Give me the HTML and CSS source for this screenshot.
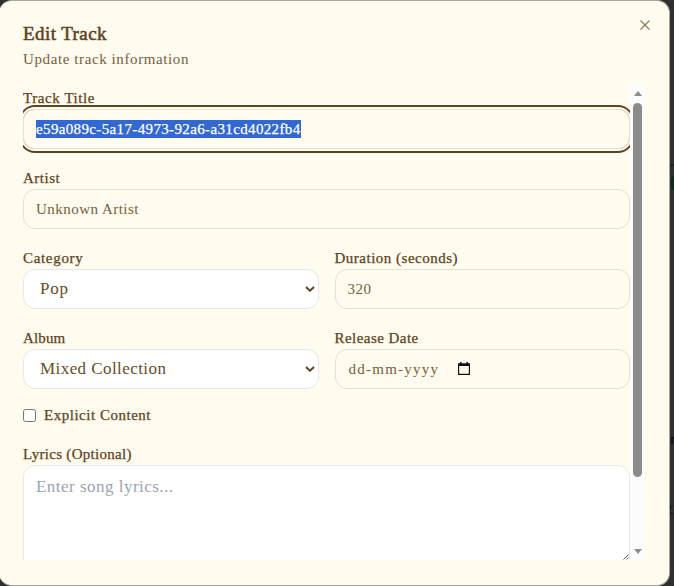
FILE: index.html
```
<!DOCTYPE html>
<html lang="en">
<head>
<meta charset="utf-8">
<title>Edit Track</title>
<link rel="stylesheet" href="styles.css">
</head>
<body>
<div class="page-hints"><i class="hint-line"></i><i class="hint-mark"></i><b class="hint-n">n</b><b class="hint-r">21</b></div>
<main class="dialog">
  <header class="head">
    <h1><span class="t-title">Edit Track</span></h1>
    <p><span class="t-sub">Update track information</span></p>
  </header>
  <button class="close" aria-label="Close"><svg width="10" height="10" viewBox="0 0 10 10"><path d="M.5.5l9 9M9.5.5l-9 9"/></svg></button>
  <div class="scroller">
    <form class="form">
      <div class="group"><label><span class="l-track">Track Title</span></label><div class="field focused"><span class="selected">e59a089c-5a17-4973-92a6-a31cd4022fb4</span></div></div>
      <div class="group"><label><span class="l-artist">Artist</span></label><div class="field"><span class="v-artist">Unknown Artist</span></div></div>
      <div class="row">
        <div class="group"><label><span class="l-cat">Category</span></label><div class="field select"><span class="v-pop">Pop</span><svg class="chev" width="10" height="6" viewBox="0 0 10 6"><path d="M1 1l4 3.7L9 1"/></svg></div></div>
        <div class="group"><label><span class="l-dur">Duration (seconds)</span></label><div class="field"><span class="v-dur">320</span></div></div>
      </div>
      <div class="row">
        <div class="group"><label><span class="l-album">Album</span></label><div class="field select"><span class="v-mixed">Mixed Collection</span><svg class="chev" width="10" height="6" viewBox="0 0 10 6"><path d="M1 1l4 3.7L9 1"/></svg></div></div>
        <div class="group"><label><span class="l-date">Release Date</span></label><div class="field date"><span class="v-date">dd-mm-yyyy</span><svg class="cal" width="12" height="13" viewBox="0 0 12 13"><path d="M.6 2h10.8v10.4H.6z" fill="none" stroke="#111" stroke-width="1.2"/><path d="M0 1.4h12V4H0zM2 0h1.5v2H2zM8.500 0H10v2H8.500z" fill="#111"/></svg></div></div>
      </div>
      <div class="check"><i class="box"></i><label><span class="l-exp">Explicit Content</span></label></div>
      <div class="group"><label><span class="l-lyr">Lyrics (Optional)</span></label><div class="field area"><span class="v-lyr">Enter song lyrics...</span></div></div>
    </form>
    <svg class="grip" width="6" height="6" viewBox="0 0 6 6"><path d="M.5 5.500l5-5M3.500 5.500l2-2"/></svg>
    <div class="bar"><i class="up"></i><i class="thumb"></i><i class="down"></i></div>
  </div>
</main>
</body>
</html>
```
FILE: styles.css
```
* { box-sizing: border-box; }
html, body { margin: 0; height: 100%; }
body {
  background: #303032;
  color: #5c4322;
  font-family: "Liberation Serif", serif;
  overflow: hidden;
  position: relative;
}
.dialog {
  position: relative;
  width: 671px;
  height: 586px;
  margin-left: -1px;
  padding: 24px 25px 25px 24px;
  background: #fffbee;
  border: 1px solid #aaa59b;
  border-left: 0;
  border-radius: 13px;
  display: flex;
  flex-direction: column;
}
.head { height: 60px; }
h1, p { margin: 0; font-weight: 400; white-space: nowrap; }
h1 { font-size: 19px; line-height: 18px; -webkit-text-stroke: .55px #5c4322; }
p { font-size: 15px; line-height: 20px; margin-top: 6px; color: #755f40; }
.close {
  position: absolute; left: 641px; top: 19px;
  width: 10px; height: 10px; padding: 0; border: 0; background: none;
}
.close svg { display: block; }
.close path { stroke: #917b61; stroke-width: 1.2; fill: none; }
.scroller {
  position: relative;
  display: flex;
  width: 622px;
  height: 475px;
  overflow: hidden;
}
.form { flex: 1; padding-top: 4px; }
.group { margin-bottom: 20px; }
.row { display: grid; grid-template-columns: 1fr 1fr; column-gap: 16px; }
label {
  display: block; height: 20px;
  font-size: 15px; line-height: 19px;
  white-space: nowrap;
  -webkit-text-stroke: .25px #5c4322;
}
.field {
  height: 40px;
  border: 1px solid #e5dfd2;
  border-radius: 12px;
  padding: 0 12px;
  display: flex;
  align-items: center;
  font-size: 15px;
  line-height: 18px;
  color: #755f40;
  white-space: nowrap;
}
.focused { box-shadow: 0 0 0 2px #fffbee, 0 0 0 4px #5c4322; }
.selected { background: #3367d1; color: #fff; -webkit-text-stroke: .25px #fff; letter-spacing: .36px; }
.select {
  background: #fff; border-color: #e5e7eb;
  padding: 0 3px 0 16px;
  justify-content: space-between;
  font-size: 17px;
  color: #654d2c;
}
.chev path { fill: none; stroke: #5c4322; stroke-width: 2; }
.date { gap: 19px; }
.date span { margin-left: 1px; }
.cal { margin-top: -1px; }
.check { display: flex; align-items: center; gap: 8px; height: 20px; margin: -4px 0 20px; }
.check label { line-height: 21px; }
.box { width: 13px; height: 13px; border: 1px solid #767676; border-radius: 2.5px; background: #fff; }
.area {
  height: 110px; background: #fff; border-color: #e5e7eb;
  align-items: flex-start; padding-top: 12px;
  font-size: 17px; color: #9ca3af;
}
.t-title { letter-spacing: .42px; }
.t-sub { letter-spacing: .6px; }
.l-track { letter-spacing: .58px; }
.l-artist { letter-spacing: .5px; }
.v-artist { letter-spacing: .48px; }
.l-cat { letter-spacing: .68px; }
.l-dur { letter-spacing: .5px; }
.v-dur { letter-spacing: .5px; }
.v-pop { letter-spacing: .8px; }
.l-album { letter-spacing: .15px; }
.v-mixed { letter-spacing: .43px; }
.l-date { letter-spacing: .45px; }
.v-date { letter-spacing: 1.25px; }
.l-exp { letter-spacing: .52px; }
.l-lyr { letter-spacing: .3px; }
.v-lyr { letter-spacing: .48px; }
.grip { position: absolute; left: 600px; bottom: 0; }
.grip path { stroke: #555; stroke-width: 1; fill: none; }
.bar {
  width: 15px; height: 475px; background: #fcfcfc;
  display: flex; flex-direction: column; align-items: center;
  padding: 6px 0;
}
.bar i { display: block; }
.up { border: 4.5px solid transparent; border-top: 0; border-bottom: 5px solid #8b8b8b; }
.thumb { width: 9px; height: 374px; margin-top: 7px; border-radius: 5px; background: #8b8b8b; }
.down { margin-top: auto; border: 4.5px solid transparent; border-bottom: 0; border-top: 5px solid #8b8b8b; }
.page-hints { position: absolute; inset: 0; }
.page-hints > * { position: absolute; color: #111; }
.hint-line { left: 669px; top: 164px; width: 5px; height: 2px; background: #0b2a19; }
.hint-mark { left: 671px; top: 176px; width: 8px; height: 14px; border-radius: 4px; background: #0b2a19; }
.hint-n { left: 670px; top: 432px; font-size: 14px; }
.hint-r { left: 665px; top: 502px; font-size: 14px; }
```
